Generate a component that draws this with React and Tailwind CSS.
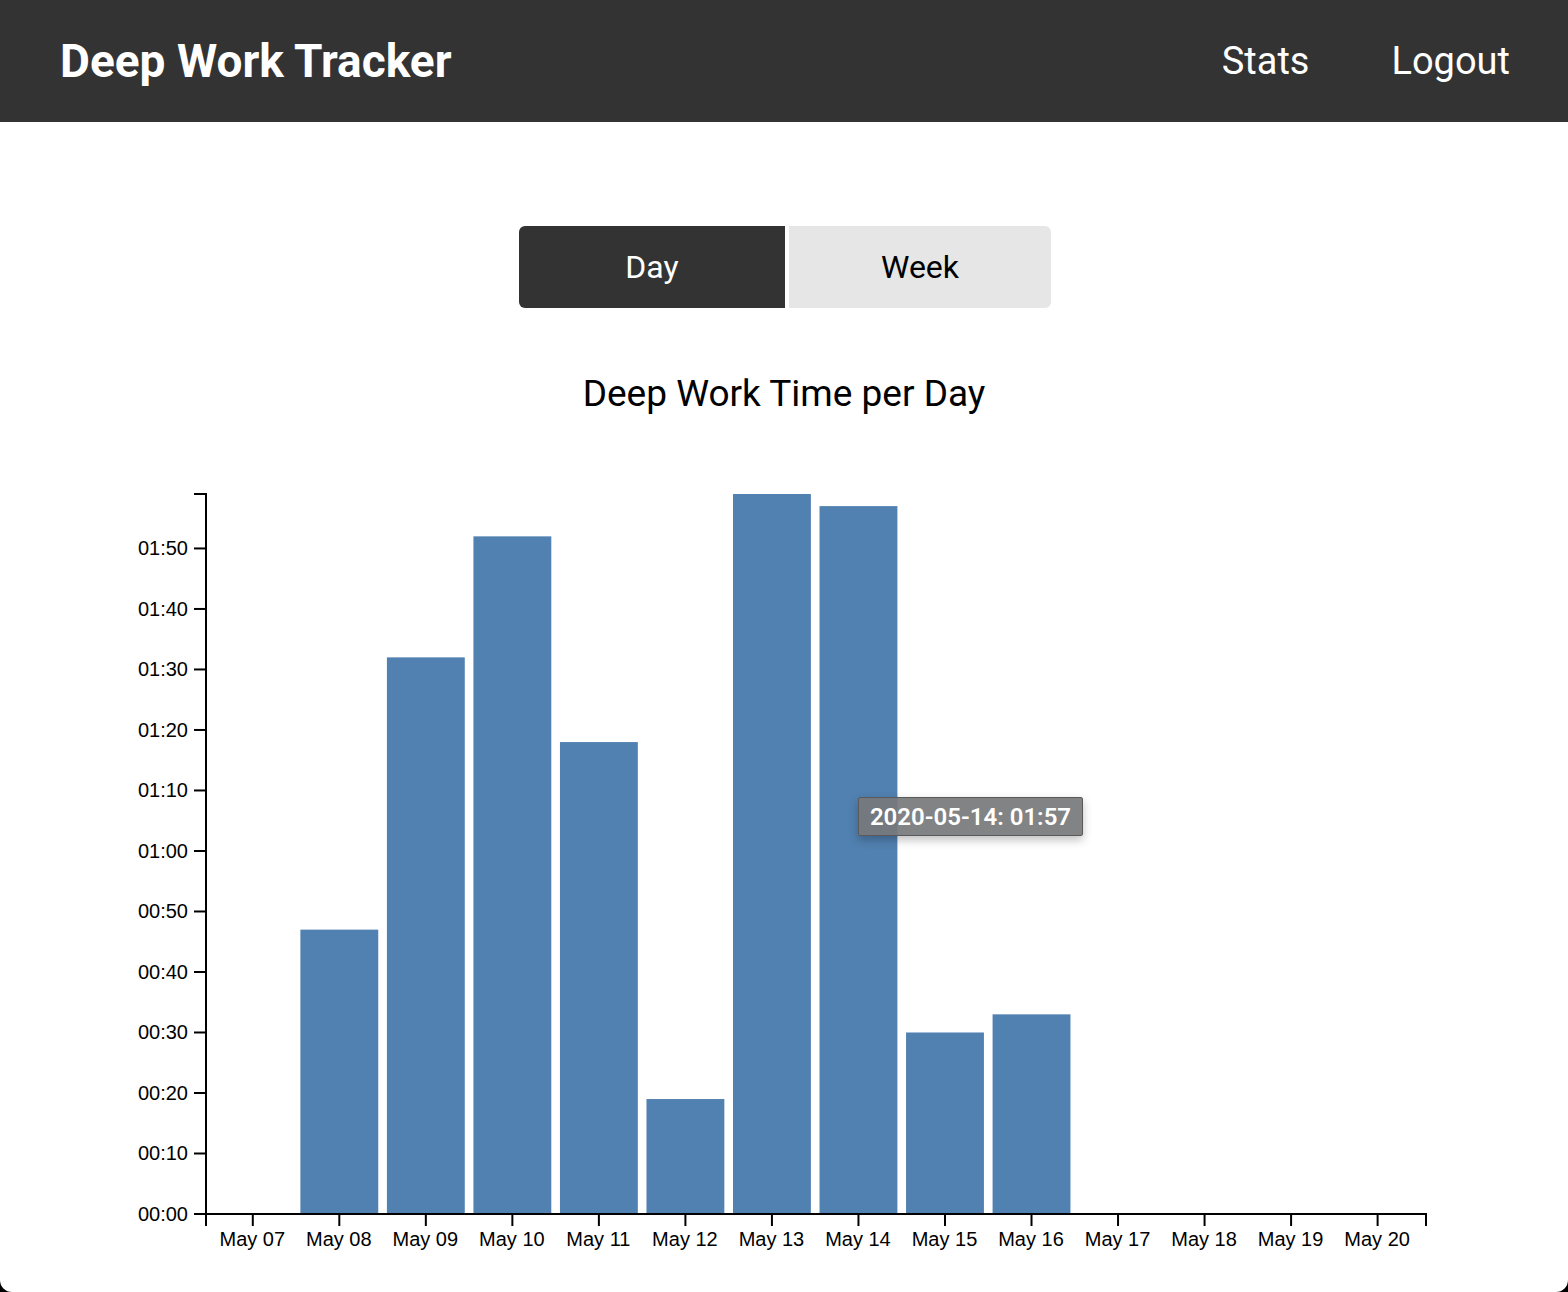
import React from "react";

const data = [
    { label: "May 07", minutes: 0 },
    { label: "May 08", minutes: 47 },
    { label: "May 09", minutes: 92 },
    { label: "May 10", minutes: 112 },
    { label: "May 11", minutes: 78 },
    { label: "May 12", minutes: 19 },
    { label: "May 13", minutes: 119 },
    { label: "May 14", minutes: 117 },
    { label: "May 15", minutes: 30 },
    { label: "May 16", minutes: 33 },
    { label: "May 17", minutes: 0 },
    { label: "May 18", minutes: 0 },
    { label: "May 19", minutes: 0 },
    { label: "May 20", minutes: 0 },
];

// chart geometry (svg coordinates, svg top sits at page y=470)
const left = 206;
const right = 1426;
const top = 24;
const bottom = 744;
const maxMin = 119;
const step = (right - left) / (data.length - 0.1 + 0.2);
const bandStart = left + step * 0.1 - 0.8;
const barW = step * 0.9;
const yScale = (m) => bottom - (m / maxMin) * (bottom - top);
const fmt = (m) =>
    `${String(Math.floor(m / 60)).padStart(2, "0")}:${String(m % 60).padStart(2, "0")}`;

const yTicks = Array.from({ length: 12 }, (_, i) => i * 10);

const Chart = () => (
    <svg width="1568" height="790" className="block" style={{ fontFamily: '"Liberation Sans", Arial, sans-serif' }}>
        {data.map((d, i) =>
            d.minutes > 0 ? (
                <rect
                    key={d.label}
                    x={bandStart + i * step}
                    y={yScale(d.minutes)}
                    width={barW}
                    height={bottom - yScale(d.minutes)}
                    fill="#5181b1"
                />
            ) : null
        )}

        {/* y axis */}
        <path d={`M194,${top}H${left}V${bottom}H194`} fill="none" stroke="#000" strokeWidth="2" />
        {yTicks.map((m) => (
            <g key={m}>
                <line x1="194" x2={left} y1={yScale(m)} y2={yScale(m)} stroke="#000" strokeWidth="2" />
                <text x="188" y={yScale(m) + 7} textAnchor="end" fontSize="20" fill="#000">
                    {fmt(m)}
                </text>
            </g>
        ))}

        {/* x axis */}
        <path d={`M${left},${bottom + 12}V${bottom}H${right}V${bottom + 12}`} fill="none" stroke="#000" strokeWidth="2" />
        {data.map((d, i) => {
            const cx = bandStart + i * step + barW / 2;
            return (
                <g key={d.label}>
                    <line x1={cx} x2={cx} y1={bottom} y2={bottom + 12} stroke="#000" strokeWidth="2" />
                    <text x={cx - 0.5} y={bottom + 32} textAnchor="middle" fontSize="20" fill="#000">
                        {d.label}
                    </text>
                </g>
            );
        })}
    </svg>
);

const App = () => {
    return (
        <div className="h-[1292px] bg-black" style={{ fontFamily: "Roboto, sans-serif" }}>
            <div className="relative h-full bg-white rounded-b-[12px] overflow-hidden">
                {/* Header */}
                <header className="h-[122px] bg-[#333333] flex items-center justify-between pl-[60px] pr-[58px]">
                    <h1 className="text-[46px] font-bold text-white leading-none">Deep Work Tracker</h1>
                    <nav className="flex items-center gap-[82px] text-[38px] text-white leading-none">
                        <a>Stats</a>
                        <a>Logout</a>
                    </nav>
                </header>

                <main className="flex flex-col items-center pt-[104px]">
                    {/* Day / Week toggle */}
                    <div className="flex gap-[4px] ml-[2px]">
                        <button className="w-[266px] h-[82px] bg-[#333333] text-white text-[32px] rounded-l-[6px]">
                            Day
                        </button>
                        <button className="w-[262px] h-[82px] bg-[#e6e6e6] text-black text-[32px] rounded-r-[6px]">
                            Week
                        </button>
                    </div>

                    <h2 className="mt-[64px] text-[37px] leading-[43px] text-black">Deep Work Time per Day</h2>

                    <div className="mt-[55px] w-full">
                        <Chart />
                    </div>
                </main>

                {/* Tooltip */}
                <div className="absolute left-[858px] top-[797px] w-[225px] h-[39px] flex items-center justify-center bg-[rgba(118,120,122,0.92)] border border-[#5a5a5a] rounded-[2px] shadow-[0_4px_10px_rgba(0,0,0,0.25)] text-white text-[24px] font-semibold leading-none">
                    2020-05-14: 01:57
                </div>
            </div>
        </div>
    );
};

export default App;
